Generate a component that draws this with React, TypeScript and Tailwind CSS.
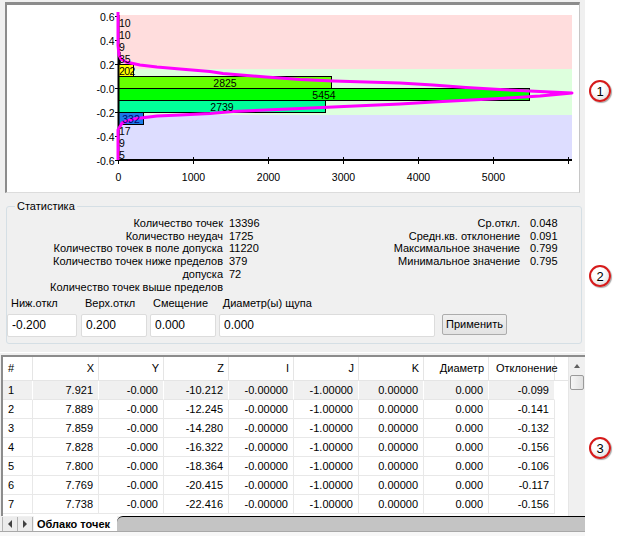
import React from "react";

const bins = [
  { n: "10", w: 0.8 },
  { n: "10", w: 0.8 },
  { n: "9", w: 0.7 },
  { n: "35", w: 2.6 },
  { n: "202", w: 15, fill: "#ffff00" },
  { n: "2825", w: 213, fill: "#66ff00" },
  { n: "5454", w: 411, fill: "#00ff00" },
  { n: "2739", w: 207, fill: "#00ff99" },
  { n: "332", w: 25, fill: "#1a7ae8", text: "#00006e" },
  { n: "17", w: 1.3 },
  { n: "9", w: 0.7 },
  { n: "5", w: 0.4 },
];

const curve = [
  [118, 12], [118, 45], [119, 55], [121, 59], [126, 62], [140, 65], [157, 67], [180, 69],
  [210, 71.5], [223, 73.5], [266, 77], [300, 79.5], [333, 81], [400, 83], [433, 85],
  [466, 87.5], [500, 89.5], [540, 91.5], [572, 93], [540, 96], [500, 98.5], [433, 102],
  [400, 104], [366, 105.5], [333, 107], [300, 108.5], [266, 110], [233, 111.5],
  [210, 113.5], [180, 115], [157, 116], [133, 119], [122, 123], [118, 130], [118, 160],
];

function Chart() {
  const yLabels = ["0.6", "0.4", "0.2", "-0.0", "-0.2", "-0.4", "-0.6"];
  return (
    <svg width={572} height={187} viewBox="7 5 572 187" className="block">
      <rect x={119} y={15} width={453} height={54} fill="#ffdddd" />
      <rect x={119} y={69} width={453} height={46} fill="#ddffdd" />
      <rect x={119} y={115} width={453} height={45} fill="#ddddff" />

      {bins.map((b, i) => {
        const top = 16 + i * 12;
        return b.fill ? (
          <rect key={i} x={118.5} y={top + 0.5} width={b.w} height={12} fill={b.fill} stroke="#000" strokeWidth={1} />
        ) : (
          <rect key={i} x={118} y={top} width={Math.max(b.w, 1)} height={12} fill="#000" />
        );
      })}

      <line x1={118.5} y1={15} x2={118.5} y2={161} stroke="#000" strokeWidth={2} />
      <line x1={118} y1={160} x2={572} y2={160} stroke="#000" strokeWidth={2} />
      {[0, 1, 2, 3, 4, 5, 6].map((k) => (
        <line key={"xt" + k} x1={118.5 + k * 75} y1={157} x2={118.5 + k * 75} y2={164} stroke="#000" strokeWidth={1} />
      ))}
      {yLabels.map((_, k) => (
        <line key={"yt" + k} x1={115} y1={16.5 + k * 24} x2={119} y2={16.5 + k * 24} stroke="#000" strokeWidth={1} />
      ))}

      <polyline
        points={curve.map((p) => p.join(",")).join(" ")}
        fill="none"
        stroke="#ff00ff"
        strokeWidth={3}
        strokeLinejoin="round"
      />

      <g fontFamily="'Liberation Sans', Arial, sans-serif" fontSize={10.5} fill="#000">
        {yLabels.map((t, k) => (
          <text key={t} x={114.5} y={20.7 + k * 24} textAnchor="end">{t}</text>
        ))}
        {["0", "1000", "2000", "3000", "4000", "5000"].map((t, k) => (
          <text key={t} x={118.5 + k * 75} y={181} textAnchor="middle">{t}</text>
        ))}
        {bins.map((b, i) => {
          const top = 16 + i * 12;
          const tw = b.n.length * 5.85;
          const fits = b.w > tw + 2;
          return (
            <text
              key={"bl" + i}
              x={fits ? 118.5 + b.w / 2 : 119}
              y={top + 11}
              textAnchor={fits ? "middle" : "start"}
              fill={b.text ?? "#000"}
              letterSpacing={b.n === "202" ? -0.6 : 0}
            >
              {b.n}
            </text>
          );
        })}
      </g>
    </svg>
  );
}

function Stats() {
  const left = [
    "Количество точек",
    "Количество неудач",
    "Количество точек в поле допуска",
    "Количество точек ниже пределов",
    "допуска",
    "Количество точек выше пределов",
  ];
  const leftVals = ["13396", "1725", "11220", "379", "72"];
  const right = ["Ср.откл.", "Средн.кв. отклонение", "Максимальное значение", "Минимальное значение"];
  const rightVals = ["0.048", "0.091", "0.799", "0.795"];

  return (
    <div className="h-[152px] shrink-0 pl-[6px] pr-[3px] pt-[6px]">
      <fieldset className="h-[145px] rounded-[3px] border border-[#d5dfe5]">
        <legend className="ml-[8px] px-[2px] leading-[14px]">Статистика</legend>
        <div className="flex pt-[4px] leading-[12.7px]">
          <div className="w-[216px] text-right">
            {left.map((t) => <div key={t}>{t}</div>)}
          </div>
          <div className="ml-[6px] w-[60px]">
            {leftVals.map((t) => <div key={t}>{t}</div>)}
          </div>
          <div className="w-[231px] text-right">
            {right.map((t) => <div key={t}>{t}</div>)}
          </div>
          <div className="ml-[10px]">
            {rightVals.map((t) => <div key={t}>{t}</div>)}
          </div>
        </div>
        <div className="mt-[3.6px] flex items-end">
          <div className="w-[70px]">
            <div className="pl-[4px] leading-[13px]">Ниж.откл</div>
            <Field value="-0.200" />
          </div>
          <div className="ml-[4px] w-[66px]">
            <div className="pl-[4px] leading-[13px]">Верх.откл</div>
            <Field value="0.200" />
          </div>
          <div className="ml-[3px] w-[66px]">
            <div className="pl-[3px] leading-[13px]">Смещение</div>
            <Field value="0.000" />
          </div>
          <div className="ml-[3px] w-[216px]">
            <div className="pl-[3.7px] leading-[13px]">Диаметр(ы) щупа</div>
            <Field value="0.000" />
          </div>
          <button className="mb-[2px] ml-[7px] h-[21px] w-[65px] rounded-[2px] border border-[#acacac] bg-gradient-to-b from-[#f0f0f0] to-[#e3e3e3] text-[11px] leading-none">
            Применить
          </button>
        </div>
      </fieldset>
    </div>
  );
}

function Field({ value }: { value: string }) {
  return (
    <input
      readOnly
      value={value}
      className="mt-[4px] block h-[23px] w-full rounded-[2px] border border-[#dcdcdc] bg-white px-[4px] text-[12px] outline-none"
    />
  );
}

const heads = ["#", "X", "Y", "Z", "I", "J", "K", "Диаметр", "Отклонение"];
const rows = [
  ["1", "7.921", "-0.000", "-10.212", "-0.00000", "-1.00000", "0.00000", "0.000", "-0.099"],
  ["2", "7.889", "-0.000", "-12.245", "-0.00000", "-1.00000", "0.00000", "0.000", "-0.141"],
  ["3", "7.859", "-0.000", "-14.280", "-0.00000", "-1.00000", "0.00000", "0.000", "-0.132"],
  ["4", "7.828", "-0.000", "-16.322", "-0.00000", "-1.00000", "0.00000", "0.000", "-0.156"],
  ["5", "7.800", "-0.000", "-18.364", "-0.00000", "-1.00000", "0.00000", "0.000", "-0.106"],
  ["6", "7.769", "-0.000", "-20.415", "-0.00000", "-1.00000", "0.00000", "0.000", "-0.117"],
  ["7", "7.738", "-0.000", "-22.416", "-0.00000", "-1.00000", "0.00000", "0.000", "-0.156"],
];

function Grid() {
  const cols = "grid grid-cols-[30px_66px_65px_65px_65px_65px_65px_65px_66px_13px]";
  return (
    <div className="ml-[1px] flex h-[161px] shrink-0 overflow-hidden border-l-2 border-t-2 border-[#8c8c8c]">
      <div className="w-[565px] overflow-hidden bg-white">
        <div className={cols + " h-[24px]"}>
          {heads.map((h, i) => (
            <div
              key={h}
              className={
                "flex items-center whitespace-nowrap border-b border-r border-[#e5e5e5] " +
                (i === 0 ? "pl-[5px]" : i === 8 ? "pl-[7px]" : "justify-end pr-[4px]")
              }
            >
              {h}
            </div>
          ))}
          <div className="border-b border-[#e5e5e5]" />
        </div>
        {rows.map((r, ri) => (
          <div key={ri} className={cols + " h-[19px]"}>
            {r.map((c, ci) => (
              <div
                key={ci}
                className={
                  "flex items-center border-b border-r " +
                  (ri === 0 ? "border-r-white border-b-[#e6e6e6] bg-[#f0f0f0] " : "border-[#e8e8e8] ") +
                  (ci === 0 ? "pl-[5px]" : "justify-end pr-[5px]")
                }
              >
                {c}
              </div>
            ))}
            <div />
          </div>
        ))}
      </div>
      <div className="flex w-[17px] flex-col border-l border-[#e6e6e6] bg-[#f0f0f0]">
        <div className="flex h-[17px] items-center justify-center">
          <span className="h-0 w-0 border-x-[3.5px] border-b-[4px] border-x-transparent border-b-[#606060]" />
        </div>
        <div className="mx-[1px] mt-[1px] h-[15px] rounded-[2px] border border-[#9a9a9a] bg-gradient-to-r from-[#f6f6f6] to-[#e0e0e0]" />
      </div>
    </div>
  );
}

function Tabs() {
  return (
    <div className="flex h-[20px] shrink-0 flex-col">
      <div className="flex h-[15px]">
        <div className="flex w-[34px] shrink-0 pl-[2px] pt-px">
          <div className="flex w-[16px] items-center justify-center border-x border-[#b4b4b4] bg-[#ececec]">
            <span className="h-0 w-0 border-y-[4px] border-r-[4px] border-y-transparent border-r-[#404040]" />
          </div>
          <div className="flex w-[15px] items-center justify-center border-r border-[#b4b4b4] bg-[#ececec]">
            <span className="h-0 w-0 border-y-[4px] border-l-[4px] border-y-transparent border-l-[#404040]" />
          </div>
        </div>
        <div className="w-[83px] shrink-0 bg-white pl-[3px] font-bold leading-[17px]">Облако точек</div>
        <div className="flex-1 rounded-tl-[6px] border-t border-black bg-[#c4c4c4]" />
      </div>
      <div className="h-px bg-[#a8a8a8]" />
      <div className="flex-1 bg-[#f7f7f7]" />
    </div>
  );
}

function Callout({ n, className }: { n: string; className: string }) {
  return (
    <div
      className={
        "flex h-[22px] w-[22px] items-center justify-center rounded-full border-2 border-[#d61a1a] bg-[radial-gradient(circle_at_40%_35%,#ffffff_35%,#d4d4d4_100%)] text-[13px] leading-none text-black shadow-[1px_1px_1px_rgba(0,0,0,0.35)] " +
        className
      }
    >
      {n}
    </div>
  );
}

export default function App() {
  return (
    <div className="flex h-[536px] w-[617px] overflow-hidden bg-white font-['Liberation_Sans',Arial,sans-serif] text-[11px] leading-none text-black">
      <div className="flex w-[585px] shrink-0 flex-col bg-[#f0f0f0]">
        <div className="h-[193px] shrink-0 px-[5px] pt-[2px]">
          <div className="h-[191px] overflow-hidden border-b border-l-2 border-r border-t-[3px] border-b-[#dcdcdc] border-l-[#8c8c8c] border-r-[#c6c6c6] border-t-[#8c8c8c] bg-white">
            <Chart />
          </div>
        </div>
        <Stats />
        <div className="h-[10px] shrink-0 pt-[7px]">
          <div className="h-px bg-white" />
        </div>
        <Grid />
        <Tabs />
      </div>
      <div className="flex flex-col pl-[4px]">
        <Callout n="1" className="mt-[80px]" />
        <Callout n="2" className="mt-[163px]" />
        <Callout n="3" className="mt-[150px]" />
      </div>
    </div>
  );
}
